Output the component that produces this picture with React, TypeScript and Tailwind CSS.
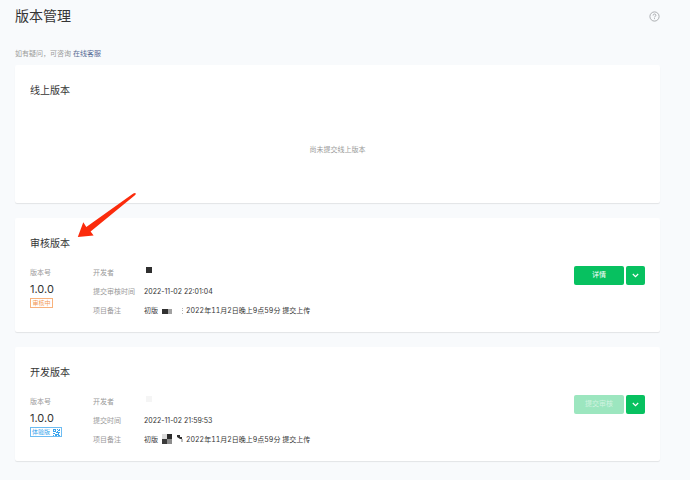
import { ReactNode } from 'react';

const HelpIcon = () => (
    <svg className="w-[11px] h-[11px]" viewBox="0 0 11 11" fill="none" stroke="#a3a5a8" strokeWidth="0.9">
        <circle cx="5.5" cy="5.5" r="4.6" />
        <path d="M4.1 4.5c0-.9.6-1.5 1.4-1.5s1.4.5 1.4 1.3c0 1-1.4 1-1.4 2.1" />
        <path d="M5.5 7.2v.9" />
    </svg>
);

const ChevronIcon = () => (
    <svg className="w-[7px] h-[5px]" viewBox="0 0 7 5" fill="none" stroke="#ffffff" strokeWidth="1.2">
        <path d="M0.8 1l2.7 2.6L6.2 1" />
    </svg>
);

const QrIcon = () => (
    <svg className="w-[7px] h-[7px]" viewBox="0 0 7 7" fill="#3ba4ec">
        <path d="M0 0h3v3H0zM1 1v1h1V1zM4 0h1v1H4zM6 0h1v2H5V1h1zM4 2h1v2H3V3h1zM0 4h2v1H0zM0 6h1v1H0zM2 5h2v2H2zM5 3h2v1H6v1H5zM4 5h1v1H4zM6 6h1v1H5V5h1z" fillRule="evenodd" />
    </svg>
);

const Arrow = () => (
    <svg className="absolute left-[62px] -top-[27px] w-[60px] h-[48px] pointer-events-none" viewBox="0 0 60 48">
        <path
            d="M0.8 46L6.3 31.3L9.3 36L56.3 2.4Q58.2 1.4 58.8 2.4Q59 3.4 57.6 4.6L13.6 40.4L16.6 44.4Z"
            fill="#fb2b0c"
        />
    </svg>
);

interface VersionCardProps {
    title: string;
    badge: ReactNode;
    developer: ReactNode;
    timeLabel: string;
    time: string;
    mosaic: ReactNode;
    action: string;
    disabled?: boolean;
    children?: ReactNode;
}

const VersionCard = ({ title, badge, developer, timeLabel, time, mosaic, action, disabled, children }: VersionCardProps) => {
    return (
        <section className="relative bg-white rounded-xs shadow-[0_1px_1px_rgba(0,0,0,0.09)] px-[15px] pt-4 pb-3">
            <h2 className="text-[10px] leading-[18px] text-[#353535]">{title}</h2>
            <div className="flex items-start mt-[11px]">
                <div className="w-[63px] shrink-0">
                    <p className="leading-[19px] text-[#9a9a9a]">版本号</p>
                    <p className="mb-[2px] text-[11px] leading-[14px] text-[#353535]">1.0.0</p>
                    {badge}
                </div>
                <dl className="grid grid-cols-[51px_1fr] flex-1 leading-[19px] text-[#353535]">
                    <dt className="text-[#9a9a9a]">开发者</dt>
                    <dd className="pt-1 pl-[2px]">{developer}</dd>
                    <dt className="text-[#9a9a9a]">{timeLabel}</dt>
                    <dd>{time}</dd>
                    <dt className="text-[#9a9a9a]">项目备注</dt>
                    <dd className="flex items-center whitespace-nowrap tabular-nums">
                        <span>初版</span>
                        {mosaic}
                        <span>2022年11月2日晚上9点59分 提交上传</span>
                    </dd>
                </dl>
                <div className="flex gap-[2px] mt-[3px]">
                    <button
                        type="button"
                        disabled={disabled}
                        className="w-[50px] h-[19px] rounded-xs bg-[#07c160] text-white disabled:bg-[#9ce6bf] disabled:text-[#d0f3e0]"
                    >
                        {action}
                    </button>
                    <button
                        type="button"
                        aria-label="更多操作"
                        className="flex items-center justify-center w-[19px] h-[19px] rounded-xs bg-[#07c160]"
                    >
                        <ChevronIcon />
                    </button>
                </div>
            </div>
            {children}
        </section>
    );
};

const App = () => {
    return (
        <div className="min-h-screen bg-[#f8fafc] pl-[15px] pr-[30px] pb-5 font-[Inter,'Noto_Sans_CJK_SC',sans-serif] text-[7px]">
            <header className="flex items-center justify-between h-8">
                <h1 className="text-[14px] leading-5 text-[#353535]">版本管理</h1>
                <button type="button" aria-label="帮助">
                    <HelpIcon />
                </button>
            </header>
            <p className="mt-4 mb-[5px] leading-3 text-[#9a9a9a]">
                如有疑问，可咨询 <a href="#service" className="text-[#576b95]">在线客服</a>
            </p>
            <main className="flex flex-col gap-[15px]">
                <section className="bg-white rounded-xs shadow-[0_1px_1px_rgba(0,0,0,0.09)] px-[15px] pt-4 pb-[47px]">
                    <h2 className="text-[10px] leading-[18px] text-[#353535]">线上版本</h2>
                    <p className="mt-[45px] leading-3 text-center text-[#9a9a9a]">尚未提交线上版本</p>
                </section>

                <VersionCard
                    title="审核版本"
                    badge={
                        <span className="flex items-center justify-center w-[23px] h-[10px] border border-[#f8b27c] text-[6px] text-[#f29a55] leading-none">
                            审核中
                        </span>
                    }
                    developer={<span className="block w-[6px] h-[6px] bg-[#2f2f2f]" />}
                    timeLabel="提交审核时间"
                    time="2022-11-02 22:01:04"
                    mosaic={
                        <svg className="w-[28px] h-[11px]" viewBox="0 0 28 11">
                            <path d="M4 4h6v5H4z" fill="#303030" />
                            <path d="M10 4h4v5h-4z" fill="#a2a2a2" />
                            <path d="M24 3h1v1h-1zM24 5h1v1h-1zM24 8h1v1h-1z" fill="#b5b5b5" />
                        </svg>
                    }
                    action="详情"
                >
                    <Arrow />
                </VersionCard>

                <VersionCard
                    title="开发版本"
                    badge={
                        <span className="flex items-center justify-center gap-[3px] w-8 h-[10px] border border-[#6dbcf2] text-[6px] text-[#3ba4ec] leading-none">
                            体验版
                            <QrIcon />
                        </span>
                    }
                    developer={<span className="block w-[6px] h-[6px] bg-[#f5f5f5]" />}
                    timeLabel="提交时间"
                    time="2022-11-02 21:59:53"
                    mosaic={
                        <svg className="w-[28px] h-[11px]" viewBox="0 0 28 11">
                            <path d="M4 0h5v5H4z" fill="#dcdcdc" />
                            <path d="M9 0h5v5H9z" fill="#2c2c2c" />
                            <path d="M4 5h5v5H4z" fill="#3a3a3a" />
                            <path d="M9 5h5v5H9z" fill="#8d8d8d" />
                            <path d="M19 1h3v2h2v2h-2l-3-2z" fill="#333333" />
                            <path d="M23 5h2v3h-2z" fill="#bdbdbd" />
                        </svg>
                    }
                    action="提交审核"
                    disabled
                />
            </main>
        </div>
    );
};

export default App;
